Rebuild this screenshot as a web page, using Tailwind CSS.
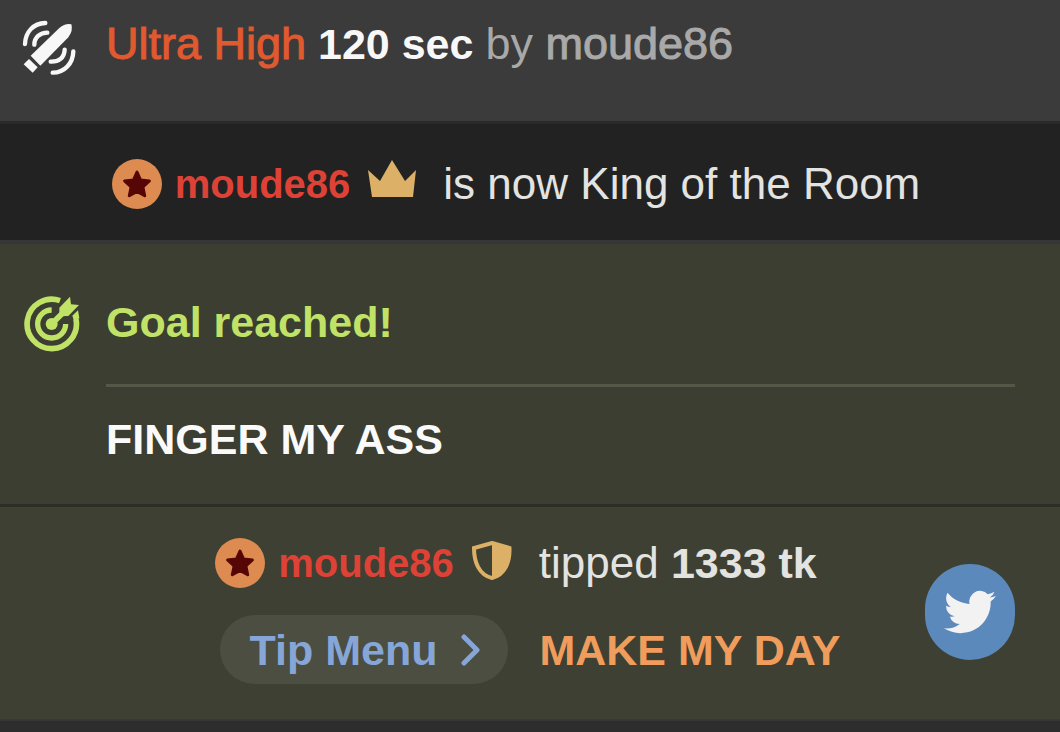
<!DOCTYPE html>
<html lang="en">
<head>
    <meta charset="UTF-8">
    <meta name="viewport" content="width=device-width, initial-scale=1.0">
    <title>Room Chat</title>
    <script src="https://cdn.jsdelivr.net/npm/@tailwindcss/browser@4"></script>
</head>
<body class="min-h-screen bg-[#2d2d2e] font-['Liberation_Sans',Arial,sans-serif] text-[43px] leading-[52px] text-[#e3e3e1]">
    <!-- icons used more than once -->
    <svg class="hidden">
        <symbol id="badge" viewBox="0 0 50 50">
            <circle cx="25" cy="25" r="25" fill="#dd8b50"></circle>
            <path d="M25 13l3.6 8 8.8 1-6.5 6 1.8 8.800-7.700-4.400-7.700 4.400 1.800-8.800-6.500-6 8.800-1z" fill="#560605" stroke="#560605" stroke-width="3" stroke-linejoin="round"></path>
        </symbol>
    </svg>

    <main>
        <!-- Toy reaction -->
        <div class="flex items-start bg-[#3b3b3b] border-b-3 border-[#2a2a2a] pt-[18px] pb-[45px] pl-[22px]">
            <svg class="w-[54px] h-[56px] mt-[2px] mr-[30px] shrink-0" viewBox="36 30 162 168" fill="none">
                <path d="M62 137L148 54Q166 39 184 43Q190 61 175 82L91 167Z" fill="#f7f7f7"></path>
                <path d="M57 147L83 172L68 188L41 163Z" fill="#f7f7f7"></path>
                <path d="M45 102C46 66 70 40 106 39M73 104C73 82 90 68 112 68M122 155C146 156 163 144 164 119M128 188C164 188 189 160 190 124" stroke="#f7f7f7" stroke-width="13" stroke-linecap="round"></path>
            </svg>
            <p class="whitespace-nowrap">
                <span class="text-[45px] text-[#e0592f] [-webkit-text-stroke:1px_#e0592f]">Ultra High</span>
                <span class="font-bold text-[#f8f8f8]">120 sec</span>
                <span class="text-[#a9a9a9] text-[45px]">by <span class="[-webkit-text-stroke:1px_#a9a9a9]">moude86</span></span>
            </p>
        </div>

        <!-- King of the room -->
        <div class="flex items-center justify-center bg-[#222222] border-b-4 border-[#363636] pt-[34px] pb-[30px] pr-7 whitespace-nowrap">
            <svg class="w-[50px] h-[50px] mr-[13px]"><use href="#badge"></use></svg>
            <a href="#" class="text-[40px] font-bold text-[#de4236]">moude86</a>
            <svg class="w-[48px] h-[37px] ml-[18px] mr-[27px] mb-[12px]" viewBox="0 0 48 37">
                <path d="M0 10L12 21L24 0L37 21L48 10L45 37H4Z" fill="#dcb167"></path>
            </svg>
            <span class="text-[44px]">is now King of the Room</span>
        </div>

        <!-- Goal -->
        <div class="flex items-start bg-[#3b3e31] border-b-3 border-[#2c2e26] pt-[52px] pb-[39px] pl-[24px] pr-[45px]">
            <svg class="w-[56px] h-[56px] mr-[26px] shrink-0" viewBox="43 33 168 168" fill="none">
                <path d="M151 47A74 74 0 1 0 199 103" stroke="#c0e267" stroke-width="17"></path>
                <path d="M193 108L188 92L205 76L209 100Z" fill="#c0e267"></path>
                <path d="M126 75A42 42 0 1 0 168 117" stroke="#c0e267" stroke-width="16"></path>
                <circle cx="126" cy="117" r="18" fill="#c0e267"></circle>
                <path d="M126 117L160 83" stroke="#c0e267" stroke-width="17"></path>
                <path d="M149 94V68L181 35L184 58L208 60L176 93Z" fill="#c0e267"></path>
            </svg>
            <div class="flex-1">
                <h2 class="font-bold text-[#c0e267]">Goal reached!</h2>
                <hr class="border-t-3 border-[#555847] mt-[36px] mb-[26px]">
                <p class="font-bold text-[#fafafa]">FINGER MY ASS</p>
            </div>
        </div>

        <!-- Tip -->
        <div class="relative bg-[#3d4032] border-b-2 border-[#373836] pt-[30px] pb-[35px]">
            <div class="flex items-center justify-center pr-7 whitespace-nowrap">
                <svg class="w-[50px] h-[50px] mr-[13px]"><use href="#badge"></use></svg>
                <a href="#" class="text-[40px] font-bold text-[#de4236]">moude86</a>
                <svg class="w-[40px] h-[39px] ml-[18px] mr-[27px] mb-[6px]" viewBox="0 0 40 39">
                    <path d="M20 2L37.500 7C38 21 33 34 20 37C7 34 2 21 2 7Z" fill="none" stroke="#dcb167" stroke-width="4"></path>
                    <path d="M20 1L38 6C38 21 33 34 20 38Z" fill="#dcb167"></path>
                </svg>
                <span class="text-[44px]">tipped <strong class="text-[43px]">1333 tk</strong></span>
            </div>
            <div class="flex items-center justify-center mt-[26px] whitespace-nowrap">
                <button class="flex items-center rounded-full bg-[#4b4e40] h-[69px] pl-[30px] pr-[27px] font-bold text-[#86a6d8]">
                    Tip Menu
                    <svg class="w-[20px] h-[32px] ml-[24px]" viewBox="0 0 20 32" fill="none">
                        <path d="M3 3L16 16L3 29" stroke="#86a6d8" stroke-width="5" stroke-linecap="round" stroke-linejoin="round"></path>
                    </svg>
                </button>
                <span class="ml-[31px] font-bold text-[#ef9c5c]">MAKE MY DAY</span>
            </div>
            <a href="#" aria-label="Twitter" class="absolute right-[45px] top-[57px] w-[90px] h-[96px] rounded-full bg-[#5b89bb] flex items-center justify-center">
                <svg class="w-[52px] h-[52px]" viewBox="0 0 24 24" fill="#f2f2f2">
                    <path d="M23.953 4.57a10 10 0 01-2.825.775 4.958 4.958 0 002.163-2.723c-.951.555-2.005.959-3.127 1.184a4.92 4.92 0 00-8.384 4.482C7.69 8.095 4.067 6.13 1.64 3.162a4.822 4.822 0 00-.666 2.475c0 1.71.87 3.213 2.188 4.096a4.904 4.904 0 01-2.228-.616v.06a4.923 4.923 0 003.946 4.827 4.996 4.996 0 01-2.212.085 4.936 4.936 0 004.604 3.417 9.867 9.867 0 01-6.102 2.105c-.39 0-.779-.023-1.17-.067a13.995 13.995 0 007.557 2.209c9.053 0 13.998-7.496 13.998-13.985 0-.21 0-.42-.015-.63A9.935 9.935 0 0024 4.59z"></path>
                </svg>
            </a>
        </div>
    </main>
</body>
</html>
